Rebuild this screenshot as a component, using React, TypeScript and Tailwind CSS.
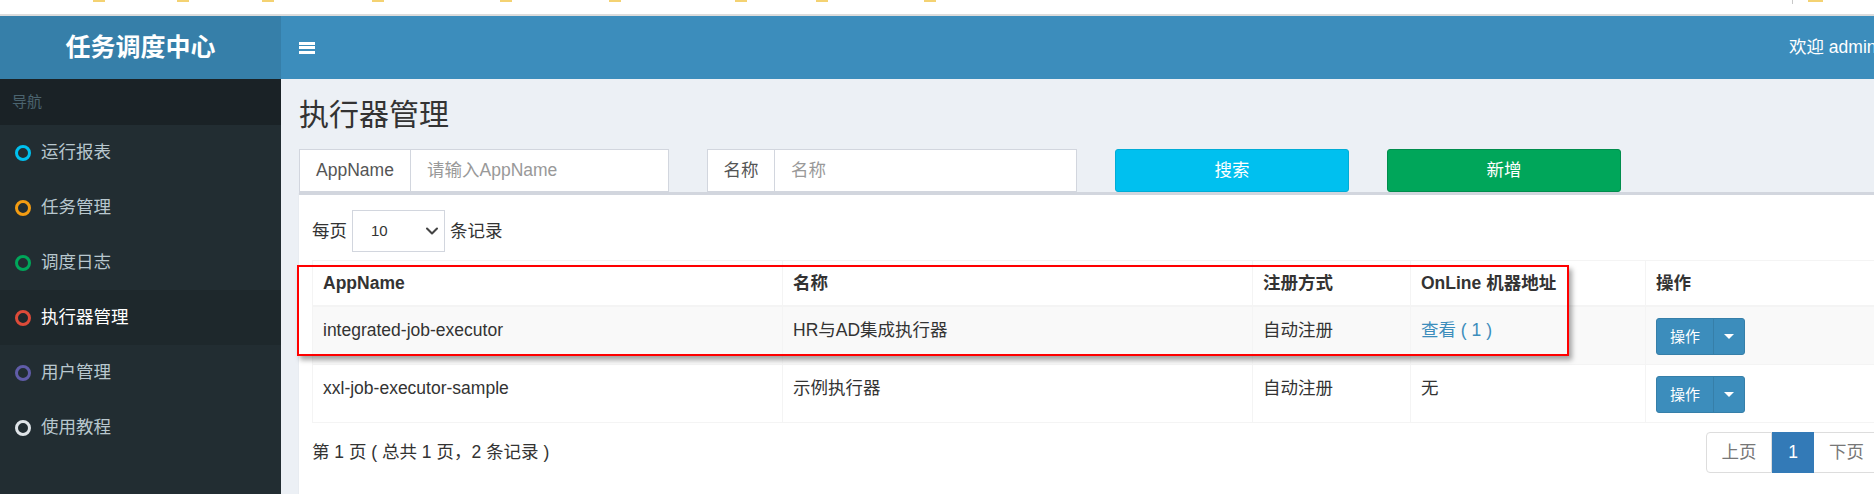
import { ChevronDown } from 'lucide-react';

const menu = [
  { label: '运行报表', ring: 'border-[#00c0ef]' },
  { label: '任务管理', ring: 'border-[#f39c12]' },
  { label: '调度日志', ring: 'border-[#00a65a]' },
  { label: '执行器管理', ring: 'border-[#dd4b39]', active: true },
  { label: '用户管理', ring: 'border-[#605ca8]' },
  { label: '使用教程', ring: 'border-[#dfe4e8]' },
];

const rows = [
  { app: 'integrated-job-executor', name: 'HR与AD集成执行器', type: '自动注册', online: '查看 ( 1 )', link: true },
  { app: 'xxl-job-executor-sample', name: '示例执行器', type: '自动注册', online: '无', link: false },
];

function OpButton() {
  return (
    <div className="flex h-[37px] w-[89px] overflow-hidden rounded-[3px] border border-[#367fa9] bg-[#3c8dbc] text-white">
      <span className="flex w-[56px] items-center justify-center text-[15px]">操作</span>
      <span className="flex flex-1 items-center justify-center border-l border-[#367fa9]">
        <span className="h-0 w-0 border-x-[5px] border-t-[5px] border-x-transparent border-t-white" />
      </span>
    </div>
  );
}

export default function App() {
  return (
    <div
      className="h-[494px] w-[1874px] overflow-hidden bg-white text-[#333]"
      style={{ fontFamily: '"Liberation Sans", "Noto Sans CJK SC", sans-serif' }}
    >
      {/* browser strip */}
      <div className="flex h-[14px] items-start">
        <span className="ml-[93px] h-[2px] w-[12px] bg-[#f4d272]" />
        <span className="ml-[72px] h-[2px] w-[12px] bg-[#f4d272]" />
        <span className="ml-[73px] h-[2px] w-[12px] bg-[#f4d272]" />
        <span className="ml-[98px] h-[2px] w-[12px] bg-[#f4d272]" />
        <span className="ml-[116px] h-[2px] w-[12px] bg-[#f4d272]" />
        <span className="ml-[97px] h-[2px] w-[12px] bg-[#f4d272]" />
        <span className="ml-[114px] h-[2px] w-[12px] bg-[#f4d272]" />
        <span className="ml-[69px] h-[2px] w-[12px] bg-[#f4d272]" />
        <span className="ml-[96px] h-[2px] w-[12px] bg-[#f4d272]" />
        <span className="ml-[856px] h-[4px] w-px bg-[#c8c8c8]" />
        <span className="ml-[15px] h-[2px] w-[15px] bg-[#f4d272]" />
      </div>
      <div className="h-[2px] bg-[#dcdcdc]" />

      {/* header */}
      <div className="flex h-[63px]">
        <div className="flex w-[281px] shrink-0 items-center justify-center bg-[#367fa9] text-[25px] font-bold text-white">
          任务调度中心
        </div>
        <div className="flex w-[1630px] shrink-0 items-center bg-[#3c8dbc] pl-[18px] text-white">
          <div className="flex flex-col gap-[1.5px]">
            <span className="h-[3px] w-[16px] bg-white" />
            <span className="h-[3px] w-[16px] bg-white" />
            <span className="h-[3px] w-[16px] bg-white" />
          </div>
          <span className="ml-[1474px] whitespace-nowrap text-[17.5px]">欢迎 admin</span>
        </div>
      </div>

      <div className="flex h-[415px]">
        {/* sidebar */}
        <aside className="w-[281px] shrink-0 bg-[#222d32]">
          <div className="flex h-[46px] items-center bg-[#1a2226] pl-[12px] text-[15px] text-[#4b646f]">导航</div>
          {menu.map((m) => (
            <div
              key={m.label}
              className={`flex h-[55px] items-center pl-[15px] text-[17.5px] ${
                m.active ? 'bg-[#1e282c] text-white' : 'text-[#b8c7ce]'
              }`}
            >
              <span className={`h-[16px] w-[16px] rounded-full border-[3px] ${m.ring}`} />
              <span className="ml-[10px]">{m.label}</span>
            </div>
          ))}
        </aside>

        {/* content */}
        <main className="w-[1630px] shrink-0 bg-[#ecf0f5] px-[18px]">
          <h1 className="pt-[19px] text-[30px] leading-[33px] font-normal">执行器管理</h1>

          <div className="mt-[18px] flex h-[43px] gap-[38px]">
            <div className="flex w-[370px] border border-[#d2d6de] bg-white text-[17.5px]">
              <span className="flex w-[111px] items-center justify-center border-r border-[#d2d6de] text-[#555]">AppName</span>
              <input
                readOnly
                placeholder="请输入AppName"
                className="min-w-0 flex-1 pl-[16px] outline-none placeholder:text-[#999]"
              />
            </div>
            <div className="flex w-[370px] border border-[#d2d6de] bg-white text-[17.5px]">
              <span className="flex w-[67px] items-center justify-center border-r border-[#d2d6de] text-[#555]">名称</span>
              <input
                readOnly
                placeholder="名称"
                className="min-w-0 flex-1 pl-[16px] outline-none placeholder:text-[#999]"
              />
            </div>
            <button className="w-[234px] rounded-[3px] border border-[#00acd6] bg-[#00c0ef] text-[17.5px] text-white">
              搜索
            </button>
            <button className="w-[234px] rounded-[3px] border border-[#008d4c] bg-[#00a65a] text-[17.5px] text-white">
              新增
            </button>
          </div>

          <div className="w-[1594px] border-t-[3px] border-[#d2d6de] bg-white px-[13px] pt-[15px] shadow-[0_1px_1px_rgba(0,0,0,0.1)]">
            <div className="flex h-[42px] items-center text-[17.5px]">
              <span>每页</span>
              <div className="ml-[5px] flex h-[42px] w-[93px] items-center justify-between border border-[#d2d6de] pl-[18px] pr-[2px] text-[15px]">
                <span>10</span>
                <ChevronDown size={20} strokeWidth={2.5} className="text-[#444]" />
              </div>
              <span className="ml-[5px]">条记录</span>
            </div>

            <div className="relative mt-[8px]">
              <table className="w-[1568px] table-fixed border-collapse border border-[#f4f4f4] text-[17.5px] leading-[25px]">
                <colgroup>
                  <col className="w-[470px]" />
                  <col className="w-[470px]" />
                  <col className="w-[158px]" />
                  <col className="w-[235px]" />
                  <col className="w-[235px]" />
                </colgroup>
                <thead>
                  <tr className="h-[45px]">
                    {['AppName', '名称', '注册方式', 'OnLine 机器地址', '操作'].map((h) => (
                      <th
                        key={h}
                        className="border border-b-2 border-[#f4f4f4] px-[10px] pt-[10px] text-left align-top font-bold"
                      >
                        {h}
                      </th>
                    ))}
                  </tr>
                </thead>
                <tbody>
                  {rows.map((r, i) => (
                    <tr key={r.app} className={`h-[58px] ${i === 0 ? 'bg-[#f9f9f9]' : ''}`}>
                      <td className="border border-[#f4f4f4] px-[10px] pt-[11px] align-top">{r.app}</td>
                      <td className="border border-[#f4f4f4] px-[10px] pt-[11px] align-top">{r.name}</td>
                      <td className="border border-[#f4f4f4] px-[10px] pt-[11px] align-top">{r.type}</td>
                      <td
                        className={`border border-[#f4f4f4] px-[10px] pt-[11px] align-top ${
                          r.link ? 'text-[#3c8dbc]' : ''
                        }`}
                      >
                        {r.online}
                      </td>
                      <td className="border border-[#f4f4f4] px-[10px] pt-[11px] pb-[9px] align-top">
                        <OpButton />
                      </td>
                    </tr>
                  ))}
                </tbody>
              </table>

              {/* annotation box */}
              <div className="pointer-events-none absolute top-[5px] left-[-15px] h-[91px] w-[1272px] border-2 border-[#ff0000] shadow-[3px_4px_5px_rgba(0,0,0,0.35)]" />
            </div>

            <div className="mt-[9px] flex h-[41px] items-center justify-between text-[17.5px]">
              <span>第 1 页 ( 总共 1 页，2 条记录 )</span>
              <div className="flex h-[41px]">
                <span className="flex w-[66px] items-center justify-center rounded-l-[4px] border border-[#ddd] text-[#777]">上页</span>
                <span className="flex w-[42px] items-center justify-center border border-[#337ab7] bg-[#337ab7] text-white">1</span>
                <span className="flex w-[66px] items-center justify-center rounded-r-[4px] border border-l-0 border-[#ddd] text-[#777]">下页</span>
              </div>
            </div>
            <div className="h-[60px]" />
          </div>
        </main>
      </div>
    </div>
  );
}
